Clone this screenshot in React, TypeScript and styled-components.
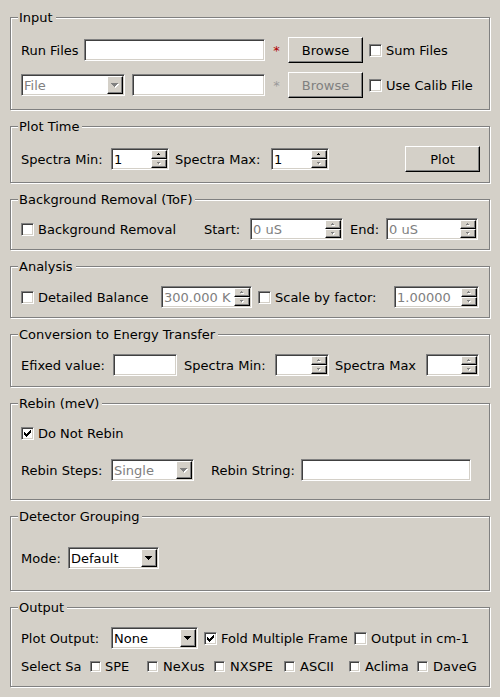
import React from "react";
import styled, { createGlobalStyle, css } from "styled-components";

const Global = createGlobalStyle`
  html, body { margin: 0; padding: 0; background: #d4d0c8; }
  body {
    font-family: "DejaVu Sans", "Liberation Sans", sans-serif;
    font-size: 13px;
    color: #000;
  }
  * { box-sizing: border-box; }
`;

const sunken = css`
  border: 1px solid;
  border-color: #808080 #fff #fff #808080;
  box-shadow: inset 1px 1px 0 #404040, inset -1px -1px 0 #d4d0c8;
`;

const raised = css`
  border: 1px solid;
  border-color: #fff #000 #000 #fff;
  box-shadow: inset -1px -1px 0 #808080;
`;

const Page = styled.div`
  width: 500px;
  height: 697px;
  padding: 10px 10px 0 10px;
  display: flex;
  flex-direction: column;
  gap: 9px;
  background: #d4d0c8;
  overflow: hidden;
`;

const Group = styled.fieldset<{ $h: number }>`
  margin: 0;
  padding: 0;
  min-width: 0;
  flex: none;
  height: ${(p) => p.$h}px;
  border: 1px solid #808080;
  box-shadow: inset 1px 1px 0 #fff, 1px 1px 0 #fff;
`;

const Legend = styled.legend`
  margin-left: 7px;
  padding: 0 3px 0 1px;
  height: 15px;
  line-height: 15px;
  background: #d4d0c8;
`;

const Body = styled.div<{ $pt: number; $gap?: number }>`
  display: flex;
  flex-direction: column;
  gap: ${(p) => p.$gap ?? 0}px;
  padding: ${(p) => p.$pt}px 9px 0 10px;
`;

const Row = styled.div<{ $h?: number }>`
  display: flex;
  align-items: center;
  height: ${(p) => p.$h ?? 22}px;
  white-space: nowrap;
`;

const Label = styled.span<{ $w?: number; $ml?: number }>`
  flex: none;
  width: ${(p) => (p.$w ? `${p.$w}px` : "auto")};
  margin-left: ${(p) => p.$ml ?? 0}px;
  overflow: hidden;
  white-space: nowrap;
`;

const Asterisk = styled.span<{ $dim?: boolean }>`
  flex: none;
  width: 23px;
  text-align: center;
  color: ${(p) => (p.$dim ? "#9a9a9a" : "#b00000")};
`;

const Field = styled.div<{ $w: number; $ml?: number; $dim?: boolean }>`
  ${sunken};
  flex: none;
  width: ${(p) => p.$w}px;
  height: 22px;
  margin-left: ${(p) => p.$ml ?? 0}px;
  background: #fff;
  display: flex;
  align-items: center;
  padding: 0 1px 0 2px;
  color: ${(p) => (p.$dim ? "#808080" : "#000")};
`;

const FieldText = styled.span`
  flex: 1;
  min-width: 0;
  overflow: hidden;
  white-space: nowrap;
`;

const SpinButtons = styled.div`
  flex: none;
  width: 16px;
  height: 18px;
  display: flex;
  flex-direction: column;
`;

const SpinButton = styled.div`
  ${raised};
  flex: 1;
  background: #d4d0c8;
  display: flex;
  align-items: center;
  justify-content: center;
`;

const ComboButton = styled.div`
  ${raised};
  flex: none;
  width: 16px;
  height: 18px;
  background: #d4d0c8;
  display: flex;
  align-items: center;
  justify-content: center;
`;

const PushButton = styled.button<{ $w: number; $ml?: number }>`
  ${raised};
  flex: none;
  width: ${(p) => p.$w}px;
  height: 26px;
  margin: 0 0 0 ${(p) => (p.$ml === undefined ? "0px" : p.$ml < 0 ? "auto" : `${p.$ml}px`)};
  padding: 0;
  background: #d4d0c8;
  font: inherit;
  color: #000;
  &:disabled {
    color: #808080;
  }
`;

const CheckItem = styled.label<{ $w?: number; $ml?: number; $gap?: number }>`
  flex: none;
  display: flex;
  align-items: center;
  gap: ${(p) => p.$gap ?? 4}px;
  width: ${(p) => (p.$w ? `${p.$w}px` : "auto")};
  margin-left: ${(p) => p.$ml ?? 0}px;
  overflow: hidden;
  white-space: nowrap;
`;

const Box = styled.span<{ $s?: number }>`
  ${sunken};
  flex: none;
  width: ${(p) => p.$s ?? 13}px;
  height: ${(p) => p.$s ?? 13}px;
  background: #fff;
  display: flex;
  align-items: center;
  justify-content: center;
`;

type Rect = [number, number, number];

const Pixels = ({ w, h, rows, color, shadow }: { w: number; h: number; rows: Rect[]; color: string; shadow?: boolean }) => (
  <svg width={w} height={h} viewBox={`0 0 ${w} ${h}`} shapeRendering="crispEdges">
    {shadow &&
      rows.map(([x, y, len], i) => <rect key={`s${i}`} x={x + 1} y={y + 1} width={len} height={1} fill="#fff" />)}
    {rows.map(([x, y, len], i) => (
      <rect key={i} x={x} y={y} width={len} height={1} fill={color} />
    ))}
  </svg>
);

const SpinArrow = ({ dir, dim }: { dir: "up" | "down"; dim?: boolean }) => (
  <Pixels
    w={4}
    h={3}
    rows={dir === "up" ? [[1, 0, 1], [0, 1, 3]] : [[0, 0, 3], [1, 1, 1]]}
    color={dim ? "#808080" : "#000"}
    shadow={dim}
  />
);

const DownArrow = ({ dim }: { dim?: boolean }) => (
  <Pixels
    w={8}
    h={5}
    rows={[[0, 0, 7], [1, 1, 5], [2, 2, 3], [3, 3, 1]]}
    color={dim ? "#808080" : "#000"}
    shadow={dim}
  />
);

const CheckMark = () => (
  <svg width="7" height="7" viewBox="0 0 7 7" shapeRendering="crispEdges">
    {[2, 3, 4, 3, 2, 1, 0].map((y, x) => (
      <rect key={x} x={x} y={y} width={1} height={3} fill="#000" />
    ))}
  </svg>
);

type SpinProps = { w: number; ml?: number; value?: string; dim?: boolean; upDim?: boolean; downDim?: boolean };

const SpinBox = ({ w, ml, value, dim, upDim, downDim }: SpinProps) => (
  <Field $w={w} $ml={ml} $dim={dim}>
    <FieldText>{value}</FieldText>
    <SpinButtons>
      <SpinButton>
        <SpinArrow dir="up" dim={dim || upDim} />
      </SpinButton>
      <SpinButton>
        <SpinArrow dir="down" dim={dim || downDim} />
      </SpinButton>
    </SpinButtons>
  </Field>
);

const ComboBox = ({ w, ml, value, dim }: { w: number; ml?: number; value: string; dim?: boolean }) => (
  <Field $w={w} $ml={ml} $dim={dim}>
    <FieldText>{value}</FieldText>
    <ComboButton>
      <DownArrow dim={dim} />
    </ComboButton>
  </Field>
);

const Check = ({
  label,
  checked,
  w,
  ml,
  size,
  gap,
}: {
  label: string;
  checked?: boolean;
  w?: number;
  ml?: number;
  size?: number;
  gap?: number;
}) => (
  <CheckItem $w={w} $ml={ml} $gap={gap}>
    <Box $s={size}>{checked && <CheckMark />}</Box>
    <span>{label}</span>
  </CheckItem>
);

export default function App() {
  return (
    <>
      <Global />
      <Page>
        <Group $h={100}>
          <Legend>Input</Legend>
          <Body $pt={12} $gap={9}>
            <Row $h={26}>
              <Label $w={63}>Run Files</Label>
              <Field $w={181} />
              <Asterisk>*</Asterisk>
              <PushButton $w={75}>Browse</PushButton>
              <Check label="Sum Files" ml={6} />
            </Row>
            <Row $h={26}>
              <ComboBox w={104} value="File" dim />
              <Field $w={133} $ml={7} />
              <Asterisk $dim>*</Asterisk>
              <PushButton $w={75} disabled>
                Browse
              </PushButton>
              <Check label="Use Calib File" ml={6} />
            </Row>
          </Body>
        </Group>

        <Group $h={64}>
          <Legend>Plot Time</Legend>
          <Body $pt={12}>
            <Row $h={26}>
              <Label $w={90}>Spectra Min:</Label>
              <SpinBox w={58} value="1" downDim />
              <Label $w={96} $ml={6}>
                Spectra Max:
              </Label>
              <SpinBox w={58} value="1" downDim />
              <PushButton $w={75} $ml={-1}>
                Plot
              </PushButton>
            </Row>
          </Body>
        </Group>

        <Group $h={58}>
          <Legend>Background Removal (ToF)</Legend>
          <Body $pt={11}>
            <Row>
              <Check label="Background Removal" w={183} />
              <Label $w={46}>Start:</Label>
              <SpinBox w={93} value="0 uS" dim />
              <Label $w={36} $ml={7}>
                End:
              </Label>
              <SpinBox w={92} value="0 uS" dim />
            </Row>
          </Body>
        </Group>

        <Group $h={59}>
          <Legend>Analysis</Legend>
          <Body $pt={12}>
            <Row>
              <Check label="Detailed Balance" w={140} />
              <SpinBox w={91} value="300.000 K" dim />
              <Check label="Scale by factor:" w={136} ml={6} />
              <SpinBox w={85} value="1.00000" dim />
            </Row>
          </Body>
        </Group>

        <Group $h={60}>
          <Legend>Conversion to Energy Transfer</Legend>
          <Body $pt={12}>
            <Row>
              <Label $w={92}>Efixed value:</Label>
              <Field $w={64} />
              <Label $w={91} $ml={7}>
                Spectra Min:
              </Label>
              <SpinBox w={54} upDim downDim />
              <Label $w={91} $ml={6}>
                Spectra Max
              </Label>
              <SpinBox w={53} upDim downDim />
            </Row>
          </Body>
        </Group>

        <Group $h={104}>
          <Legend>Rebin (meV)</Legend>
          <Body $pt={11} $gap={15}>
            <Row>
              <Check label="Do Not Rebin" checked />
            </Row>
            <Row>
              <Label $w={90}>Rebin Steps:</Label>
              <ComboBox w={83} value="Single" dim />
              <Label $w={90} $ml={17}>
                Rebin String:
              </Label>
              <Field $w={170} />
            </Row>
          </Body>
        </Group>

        <Group $h={82}>
          <Legend>Detector Grouping</Legend>
          <Body $pt={23}>
            <Row>
              <Label $w={47}>Mode:</Label>
              <ComboBox w={91} value="Default" />
            </Row>
          </Body>
        </Group>

        <Group $h={87}>
          <Legend>Output</Legend>
          <Body $pt={12} $gap={8}>
            <Row>
              <Label $w={90}>Plot Output:</Label>
              <ComboBox w={87} value="None" />
              <Check label="Fold Multiple Frame" checked w={143} ml={6} />
              <Check label="Output in cm-1" ml={7} />
            </Row>
            <Row $h={18}>
              <Label $w={69}>Select Sa</Label>
              <Check label="SPE" size={11} w={57} />
              <Check label="NeXus" size={11} w={67} gap={5} />
              <Check label="NXSPE" size={11} w={70} gap={5} />
              <Check label="ASCII" size={11} w={65} gap={5} />
              <Check label="Aclima" size={11} w={60} gap={5} />
              <Check label="DaveG" size={11} ml={8} w={62} gap={5} />
            </Row>
          </Body>
        </Group>
      </Page>
    </>
  );
}
